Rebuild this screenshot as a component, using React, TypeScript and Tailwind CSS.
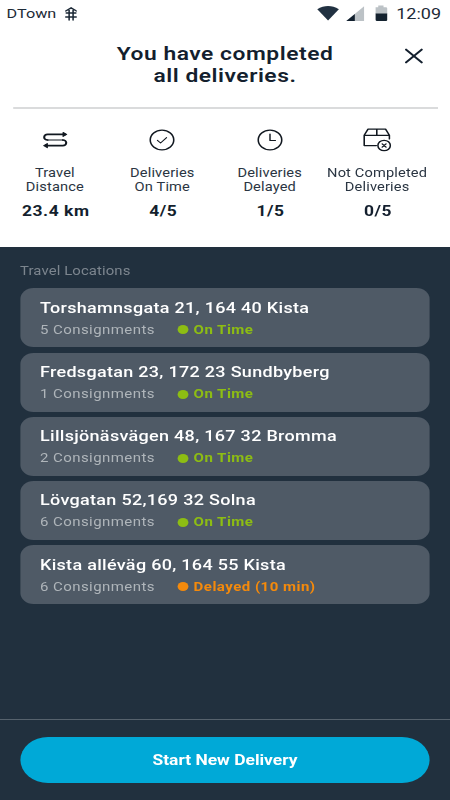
import React from "react";

const stops = [
  { address: "Torshamnsgata 21, 164 40 Kista", count: 5, status: "On Time", late: false },
  { address: "Fredsgatan 23, 172 23 Sundbyberg", count: 1, status: "On Time", late: false },
  { address: "Lillsjönäsvägen 48, 167 32 Bromma", count: 2, status: "On Time", late: false },
  { address: "Lövgatan 52,169 32 Solna", count: 6, status: "On Time", late: false },
  { address: "Kista alléväg 60, 164 55 Kista", count: 6, status: "Delayed (10 min)", late: true },
];

const line = {
  fill: "none",
  stroke: "#111820",
  strokeWidth: 1.3,
  strokeLinecap: "round" as const,
  strokeLinejoin: "round" as const,
};

function RouteIcon() {
  return (
    <svg width="24" height="24" viewBox="0 0 24 24" {...line} strokeWidth={1.7}>
      <path d="M20 6.4H5.6a2.8 2.8 0 0 0 0 5.6" />
      <path d="M5.6 12h12.8" strokeWidth="1.2" />
      <path d="M18.4 12a2.8 2.8 0 0 1 0 5.6H4" />
      <path d="M18.6 4.4l2.9 2-2.9 2zM5.4 15.6l-2.9 2 2.9 2z" fill="#111820" strokeWidth="1" />
    </svg>
  );
}

function CheckIcon() {
  return (
    <svg width="24" height="24" viewBox="0 0 24 24" {...line}>
      <circle cx="12" cy="12" r="9.8" />
      <path d="M8.2 12.4l2.6 2.6 5-5.4" strokeWidth="1" />
    </svg>
  );
}

function ClockIcon() {
  return (
    <svg width="24" height="24" viewBox="0 0 24 24" {...line}>
      <circle cx="12" cy="12" r="9.8" />
      <path d="M12 6v6.5h4.5" strokeWidth="1.2" />
    </svg>
  );
}

function BoxIcon() {
  return (
    <svg width="24" height="24" viewBox="0 0 24 24" {...line}>
      <path d="M11.6 17.6H1.5V7.3L4.7 1.1h14.6l3.2 6.2v3.6M1.5 7.3h21M12 1.1v6.2" />
      <circle cx="18.1" cy="17.5" r="5.2" />
      <path d="M16.5 15.9l3.2 3.2M19.7 15.9l-3.2 3.2" strokeWidth="1.2" />
    </svg>
  );
}

const stats = [
  { icon: <RouteIcon />, top: "Travel", bottom: "Distance", value: "23.4 km" },
  { icon: <CheckIcon />, top: "Deliveries", bottom: "On Time", value: "4/5" },
  { icon: <ClockIcon />, top: "Deliveries", bottom: "Delayed", value: "1/5" },
  { icon: <BoxIcon />, top: "Not Completed", bottom: "Deliveries", value: "0/5" },
];

function StatusBar() {
  return (
    <div className="flex h-[27px] items-center pl-[5.5px] pr-[7.5px] text-[#1d2a37]">
      <span className="text-[13.5px] leading-none">DTown</span>
      <svg className="ml-[6.8px]" width="10.5" height="14" viewBox="0 0 10.5 14" fill="none" stroke="#1d2a37" strokeWidth="1.3" strokeLinecap="round">
        <path d="M0.8 4L5.25 0.9 9.7 4M1.2 6h8.1M0.8 10h8.9M3.6 3v10M6.9 3v10" />
      </svg>
      <div className="grow" />
      <svg width="59" height="17" viewBox="0 0 59 17">
        <path d="M0.4 4.2C6.3-0.2 12.5-0.2 18.4 4.2L9.4 15.4z" fill="#213141" />
        <path d="M39.4 1.2V16H24.6z" fill="#bcc2c6" />
        <path d="M31.7 9V16H24.6z" fill="#101e2c" />
        <path d="M49 2.3h2.2V0.6h4.4v1.7h2.2a1.2 1.2 0 0 1 1 1.2V9H49V3.5z" fill="#bcc2c6" />
        <path d="M49 8.4h9.8v6.4a1.2 1.2 0 0 1-1.2 1.2h-7.4a1.2 1.2 0 0 1-1.2-1.2z" fill="#14222f" />
      </svg>
      <span className="ml-[6.7px] pt-px text-[15px] leading-none">12:09</span>
    </div>
  );
}

export default function App() {
  return (
    <div className="h-[800px] w-[450px] overflow-hidden bg-[#21303e]">
      {/* Handset layout is 375 units wide, widened to fill the 450px screen */}
      <div className="flex h-[800px] w-[375px] origin-left scale-x-[1.2] flex-col font-['Roboto','Liberation_Sans',sans-serif]">
        <header className="flex h-[246.5px] shrink-0 flex-col bg-white">
          <StatusBar />
          <div className="ml-[10.5px] mr-[10.5px] grid h-[82px] grid-cols-[40px_1fr_40px] border-b-2 border-[#dadbdc] pt-[16px]">
            <span />
            <h1 className="text-center text-[19px] font-semibold leading-[22px] tracking-[0.45px] text-[#141f2e]">
              You have completed
              <br />
              all deliveries.
            </h1>
            <svg className="ml-[12px] mt-[5px]" width="16" height="16" viewBox="0 0 16 16" stroke="#14202e" strokeWidth="1.9" strokeLinecap="round">
              <path d="M1.4 1.6l13 12.8M14.4 1.6L1.4 14.4" />
            </svg>
          </div>
          <div className="ml-px mt-[19px] grid w-[358px] grid-cols-4 text-[#2a3542]">
            {stats.map((s) => (
              <div key={s.value} className="flex flex-col items-center whitespace-nowrap text-center">
                {s.icon}
                <div className="mt-[13.5px] text-[12.2px] leading-[14.6px] tracking-[0.12px]">
                  {s.top}
                  <br />
                  {s.bottom}
                </div>
                <div className="mt-[9.6px] pl-[1.5px] text-[14.5px] font-bold leading-4 tracking-[0.45px] text-[#141f2e]">{s.value}</div>
              </div>
            ))}
          </div>
        </header>
        <main className="grow px-[16.67px] pt-[16px]">
          <h2 className="text-[12.4px] leading-4 tracking-[0.1px] text-[#7c858e]">Travel Locations</h2>
          <ul className="mt-[9.9px] flex flex-col gap-[5.2px]">
            {stops.map((s) => (
              <li key={s.address} className="h-[59px] rounded-[11px] bg-[#4f5a66] pl-[16.67px] pt-[9.5px] leading-5">
                <div className="text-[15px] font-medium tracking-[0.25px] text-white">{s.address}</div>
                <div className="mt-[3px] flex items-center text-[12.5px] leading-[18px]">
                  <span className="w-[114.5px] tracking-[0.36px] text-[#afb5ba]">{s.count} Consignments</span>
                  <span className={s.late ? "size-[9px] rounded-full bg-[#f58a0b]" : "size-[9px] rounded-full bg-[#8dbd13]"} />
                  <span className={s.late ? "ml-[4.5px] font-bold tracking-[0.4px] text-[#f58a0b]" : "ml-[4.5px] font-bold tracking-[0.4px] text-[#8dbd13]"}>
                    {s.status}
                  </span>
                </div>
              </li>
            ))}
          </ul>
        </main>
        <footer className="h-[81px] shrink-0 border-t border-[#56626d] px-[16.67px] pt-[17px]">
          <button className="block h-[46px] w-full rounded-full bg-[#00a9d7] pt-[2px] text-[14.5px] font-bold text-white">Start New Delivery</button>
        </footer>
      </div>
    </div>
  );
}
